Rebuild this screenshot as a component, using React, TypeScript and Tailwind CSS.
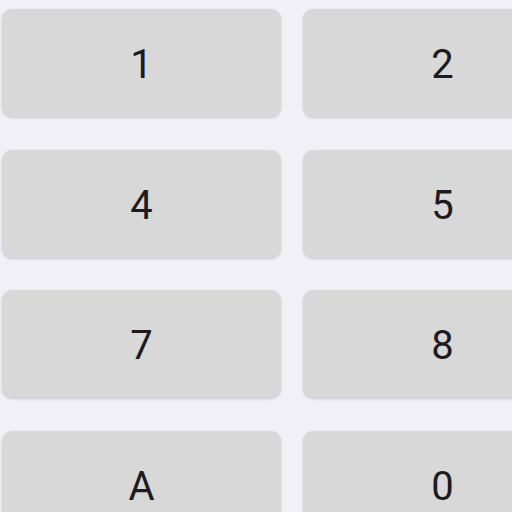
const keys = ['1', '2', '4', '5', '7', '8', 'A', '0'];

export default function App() {
  return (
    <div className="h-[512px] w-[512px] overflow-hidden bg-[#f1f0f7]">
      <div
        className="grid w-[600px] grid-cols-[279px_279px] gap-x-[22px] gap-y-[32.67px] pl-[2px] pt-[9px]"
        style={{ fontFamily: 'Roboto, "Noto Sans", sans-serif' }}
      >
        {keys.map((k) => (
          <button
            key={k}
            className="flex h-[108px] items-center justify-center rounded-[10px] bg-[#d7d8d7] pt-[4px] text-[40px] font-normal text-[#1d1b20] shadow-[0_1px_3px_rgba(40,30,80,0.14),0_1px_2px_rgba(0,0,0,0.06)]"
          >
            {k}
          </button>
        ))}
      </div>
    </div>
  );
}
